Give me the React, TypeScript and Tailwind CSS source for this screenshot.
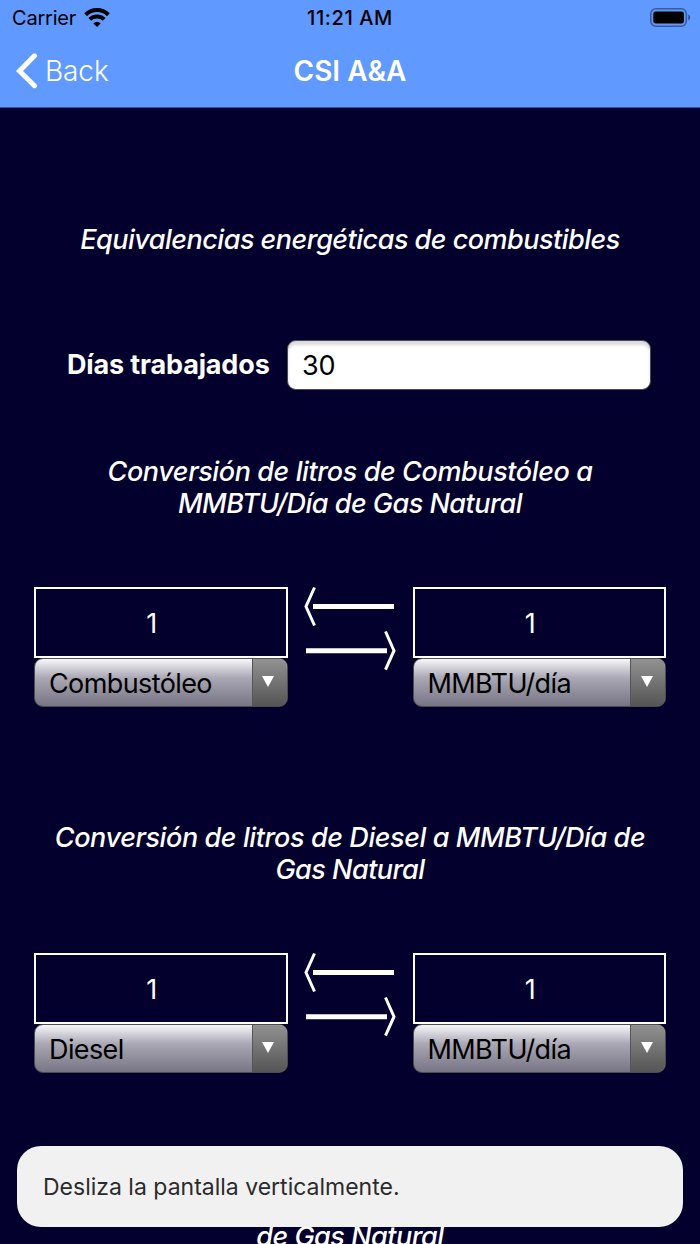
import React, { useState } from 'react';

interface ConversionProps {
  title: string[];
  fuel: string;
}

const WifiIcon: React.FC = () => (
  <svg width="26" height="20" viewBox="0 0 26 20" fill="none" stroke="#000" strokeWidth="4">
    <path d="M1.600 6.700a16.400 16.400 0 0 1 22.800 0" />
    <path d="M5.800 11.400a10.500 10.500 0 0 1 14.400 0" />
    <path d="M13 19l-3.700-3.600a5.200 5.200 0 0 1 7.400 0z" fill="#000" stroke="none" />
  </svg>
);

const BatteryIcon: React.FC = () => (
  <svg width="42" height="20" viewBox="0 0 42 20" fill="none">
    <rect x="0.8" y="0.8" width="35.500" height="17.400" rx="5" stroke="#000" strokeOpacity="0.4" strokeWidth="1.6" />
    <rect x="3.3" y="3.4" width="30.600" height="12.200" rx="2.4" fill="#000" />
    <path d="M38.300 6.500v6c2.400-1 2.400-5 0-6z" fill="#000" fillOpacity="0.5" />
  </svg>
);

const ArrowsIcon: React.FC = () => (
  <svg className="-mt-px" width="92" height="86" viewBox="0 0 92 86" fill="none" stroke="#fff">
    <path d="M10.500 1.500L2 20.500l8.500 19" strokeWidth="3" />
    <path d="M9 20.500h81" strokeWidth="5" />
    <path d="M2 64.700h81" strokeWidth="5" />
    <path d="M81.500 45.500L90 64.700l-8.500 19" strokeWidth="3" />
  </svg>
);

const Select: React.FC<{ value: string }> = ({ value }) => (
  <button className="flex h-[49px] w-full overflow-hidden rounded-[9px] border border-[#4c4c4c] bg-linear-to-b from-[#f8f8fa] via-[#aaa8b5] via-40% to-[#787584] text-left">
    <span className="h-full flex-1 pl-[14px] text-[27px] leading-[49px] tracking-[-0.6px] whitespace-nowrap text-black">{value}</span>
    <span className="flex h-full w-[35px] justify-center border-l border-[#555] bg-linear-to-b from-[#929292] to-[#555] pt-[17px] pr-[3px]">
      <svg width="12" height="11" viewBox="0 0 12 11">
        <path d="M0 0h12L6 11z" fill="#fff" />
      </svg>
    </span>
  </button>
);

const Unit: React.FC<{ name: string }> = ({ name }) => {
  const [value, setValue] = useState('1');

  return (
    <div className="w-[253.5px]">
      <input
        value={value}
        onChange={(e) => setValue(e.target.value)}
        className="block h-[71px] w-full border-2 border-white bg-transparent pt-px pr-[18px] text-center text-[27px] text-white outline-none"
      />
      <Select value={name} />
    </div>
  );
};

const Heading: React.FC<{ lines: string[] }> = ({ lines }) => (
  <h2 className="text-center text-[27px] leading-8 font-medium text-white italic">
    {lines.map((line, i) => (
      <span
        key={line}
        className={i < lines.length - 1 ? 'block tracking-[-0.4px] whitespace-nowrap' : 'block tracking-[-0.5px] whitespace-nowrap'}
      >
        {line}
      </span>
    ))}
  </h2>
);

const Conversion: React.FC<ConversionProps> = ({ title, fuel }) => (
  <section className="h-[366px] shrink-0">
    <Heading lines={title} />
    <div className="mt-[67px] flex justify-between px-[34px]">
      <Unit name={fuel} />
      <ArrowsIcon />
      <Unit name="MMBTU/día" />
    </div>
  </section>
);

const App: React.FC = () => {
  const [days, setDays] = useState('30');

  return (
    <div className="relative flex h-[1244px] w-[700px] flex-col overflow-hidden bg-[#03002e] font-['Inter',sans-serif]">
      <header className="h-[108px] shrink-0 border-b border-[#34518f] bg-[#6099ff]">
        <div className="grid h-9 grid-cols-3 items-center text-[20px] leading-9 text-black">
          <div className="flex items-center gap-2 pl-3">
            <span className="tracking-[-0.2px]">Carrier</span>
            <WifiIcon />
          </div>
          <span className="text-center font-medium tracking-[0.6px]">11:21 AM</span>
          <div className="flex justify-end pr-[8px]">
            <BatteryIcon />
          </div>
        </div>
        <div className="grid h-[70px] grid-cols-3 items-center text-[28px] text-white">
          <button className="flex items-center gap-[7px] pl-4">
            <svg width="22" height="36" viewBox="0 0 22 36" fill="none" stroke="#fff" strokeWidth="5" strokeLinecap="round" strokeLinejoin="miter">
              <path d="M18.500 2.800L3.500 18l15 14.700" />
            </svg>
            <span className="font-light tracking-[-0.1px]">Back</span>
          </button>
          <h1 className="text-center font-semibold">CSI A&amp;A</h1>
        </div>
      </header>

      <main className="flex flex-1 flex-col overflow-hidden pt-[116px]">
        <Heading lines={['Equivalencias energéticas de combustibles']} />
        <label className="mt-[84px] mb-[66px] flex h-[50px] shrink-0 items-center justify-between pr-[49px] pl-[67px]">
          <span className="text-[27px] font-bold tracking-[-0.15px] whitespace-nowrap text-white">Días trabajados</span>
          <input
            value={days}
            onChange={(e) => setDays(e.target.value)}
            className="h-[50px] w-[364px] rounded-[9px] border-[1.5px] border-[#4c4c4c] bg-white px-[14px] text-[27px] tracking-[-0.3px] text-black shadow-[inset_0_4px_3px_#dddadd] outline-none"
          />
        </label>
        <Conversion title={['Conversión de litros de Combustóleo a', 'MMBTU/Día de Gas Natural']} fuel="Combustóleo" />
        <Conversion title={['Conversión de litros de Diesel a MMBTU/Día de', 'Gas Natural']} fuel="Diesel" />
        <div className="pt-px">
          <Heading lines={['Conversión de litros de Gas LP a MMBTU/Día', 'de Gas Natural']} />
        </div>
      </main>

      {/* Scroll hint */}
      <div className="absolute top-[1146px] left-[17px] flex h-[81px] w-[666px] items-center rounded-[24px] bg-[#f1f1f1] px-[26px] pt-px text-[23px] text-[#2b2b2b]">
        Desliza la pantalla verticalmente.
      </div>
    </div>
  );
};

export default App;
